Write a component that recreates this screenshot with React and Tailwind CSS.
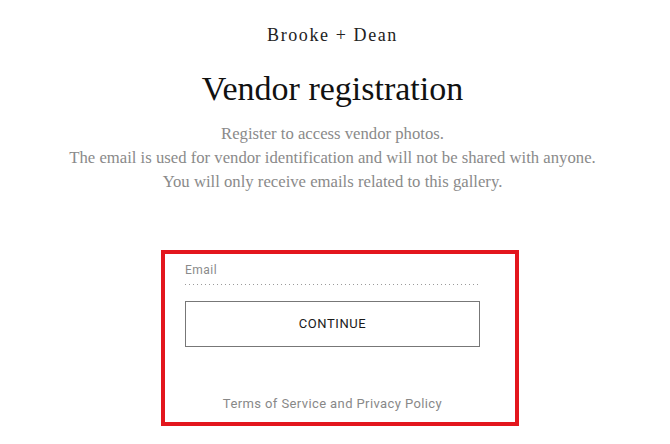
export default function App() {
  return (
    <div className="min-h-[444px] w-[665px] bg-white flex flex-col items-center pt-[23px]">
      <div className="text-[18px] leading-[24px] tracking-[1.6px] text-[#222]" style={{ fontFamily: '"Liberation Serif", serif' }}>
        Brooke + Dean
      </div>
      <h1 className="mt-[22px] text-[34px] leading-[40px] text-[#111]" style={{ fontFamily: '"Liberation Serif", serif' }}>
        Vendor registration
      </h1>
      <div className="mt-[13px] text-center text-[16.7px] leading-[24px] text-[#8a8a8a]" style={{ fontFamily: '"Liberation Serif", serif' }}>
        <p>Register to access vendor photos.</p>
        <p>The email is used for vendor identification and will not be shared with anyone.</p>
        <p>You will only receive emails related to this gallery.</p>
      </div>
      <div className="mt-[56px] ml-[15px] w-[358px] h-[176px] border-4 border-[#e3161d] pl-[20px] pr-[35px] pt-[7px] flex flex-col" style={{ fontFamily: 'Roboto, sans-serif' }}>
        <label className="text-[12px] leading-[18px] tracking-[0.5px] text-[#8a8a8a]">Email</label>
        <div className="mt-[5px] h-px w-full bg-[linear-gradient(to_right,#9a9a9a_1px,transparent_1px)] bg-[length:4px_1px]" />
        <button className="mt-[16px] h-[46px] w-full border border-[#777] text-[13px] tracking-[0.6px] text-[#1a1a1a] bg-white">
          CONTINUE
        </button>
        <div className="mt-auto mb-[9px] text-center text-[13px] tracking-[0.4px] text-[#888]">
          Terms of Service and Privacy Policy
        </div>
      </div>
    </div>
  );
}
